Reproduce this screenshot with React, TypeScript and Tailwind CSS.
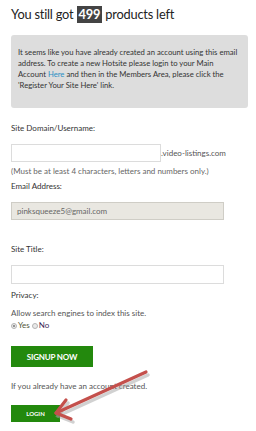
import React from 'react';

function Radio({ checked }: { checked?: boolean }) {
  return (
    <span className="inline-flex items-center justify-center w-[6px] h-[6px] rounded-full border border-[#b5b5b5] bg-[#e9e9e9]">
      {checked && <span className="w-[2px] h-[2px] rounded-full bg-[#777]" />}
    </span>
  );
}

function Arrow() {
  return (
    <svg className="absolute left-0 top-0 pointer-events-none" width="256" height="431" viewBox="0 0 256 431">
      <g stroke="#9a9a9a" strokeOpacity="0.45" strokeWidth="3.5" strokeLinecap="round" fill="none" transform="translate(2 3)">
        <path d="M146 372 L56 413" />
        <path d="M66 400 L56 413 L71 419" />
      </g>
      <g stroke="#c4504c" strokeWidth="3.2" strokeLinecap="round" strokeLinejoin="round" fill="none">
        <path d="M146 372 L56 413" />
        <path d="M66 400 L56 413 L71 419" />
      </g>
    </svg>
  );
}

export default function App() {
  return (
    <div className="relative w-[256px] h-[431px] bg-white overflow-hidden font-['Lato','Liberation_Sans',sans-serif] text-[#333]">
      <div className="pl-[11px] pt-[6px]">
        <h1 className="text-[12.8px] leading-[17px] tracking-[-0.2px] text-[#222] whitespace-nowrap">
          You still got{' '}
          <span className="inline-block bg-[#444] text-white font-bold px-[2px]">499</span>{' '}
          products left
        </h1>

        <div className="mt-[12px] w-[237px] h-[73px] rounded-[3px] bg-[#dddddd] pl-[7px] pr-[4px] pt-[12px] text-[7.7px] leading-[11px] text-[#333] whitespace-nowrap">
          It seems like you have already created an account using this email
          <br />
          address. To create a new Hotsite please login to your Main
          <br />
          Account <span className="text-[#2a8fc4]">Here</span> and then in the Members Area, please click the
          <br />
          'Register Your Site Here' link.
        </div>

        <div className="mt-[15px] text-[8px] leading-[11px] text-[#333]">Site Domain/Username:</div>
        <div className="mt-[10px] flex items-center">
          <div className="w-[150px] h-[18px] border border-[#dcdcdc] bg-white" />
          <span className="text-[8px] leading-[11px] text-[#555]">.video-listings.com</span>
        </div>
        <div className="mt-[4px] text-[8px] leading-[11px] text-[#666]">
          (Must be at least 4 characters, letters and numbers only.)
        </div>

        <div className="mt-[4px] text-[8px] leading-[11px] text-[#333]">Email Address:</div>
        <div className="mt-[10px] w-[213px] h-[18px] border border-[#cfcdc6] bg-[#e9e7e1] flex items-center pl-[5px] text-[8px] text-[#666]">
          pinksqueeze5@gmail.com
        </div>

        <div className="mt-[24px] text-[8px] leading-[11px] text-[#333]">Site Title:</div>
        <div className="mt-[10px] w-[213px] h-[19px] border border-[#dcdcdc] bg-white" />

        <div className="mt-[6px] text-[8px] leading-[11px] text-[#333]">Privacy:</div>
        <div className="mt-[7px] text-[8px] leading-[11px] text-[#555]">Allow search engines to index this site.</div>
        <div className="mt-[1px] flex items-center gap-[1px] text-[8px] leading-[11px]">
          <Radio checked />
          <span className="text-[#4f5536] mr-[1px]">Yes</span>
          <Radio />
          <span className="text-[#3b1f58]">No</span>
        </div>

        <button className="mt-[15px] block w-[82px] h-[21px] bg-[#23890d] text-white text-[8px] font-bold uppercase tracking-[-0.2px]">
          Signup Now
        </button>

        <div className="mt-[14px] text-[8px] leading-[11px] text-[#555]">If you already have an account created.</div>

        <button className="mt-[13px] block w-[49px] h-[17px] bg-[#23890d] text-white text-[6px] font-bold uppercase">
          Login
        </button>
      </div>
      <Arrow />
    </div>
  );
}
